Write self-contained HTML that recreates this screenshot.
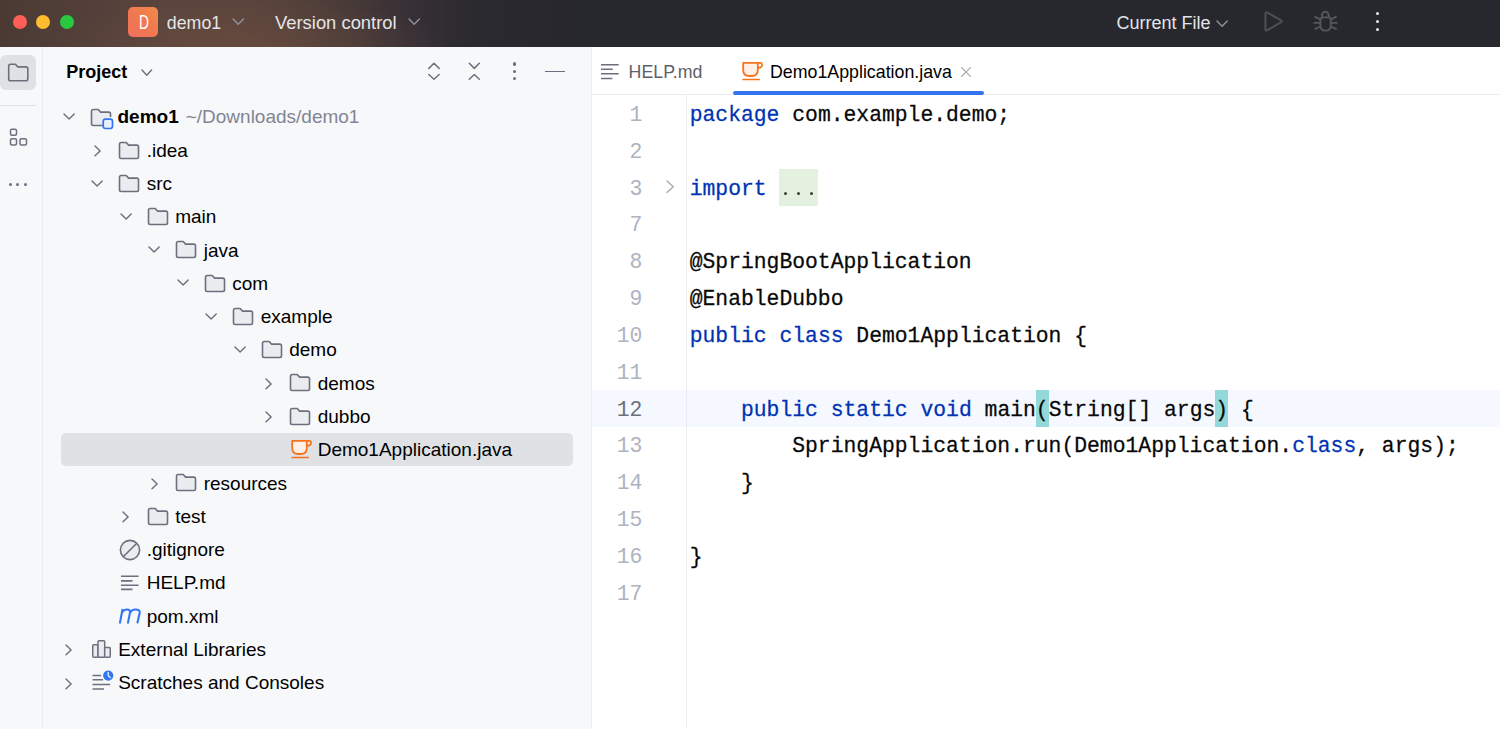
<!DOCTYPE html><html><head><meta charset="utf-8"><style>
html,body{margin:0;padding:0;}
body{width:1500px;height:729px;overflow:hidden;position:relative;background:#f7f8fa;font-family:"Liberation Sans",sans-serif;}
.t{position:absolute;line-height:0;white-space:pre;}
.ic{position:absolute;overflow:visible;}
.abs{position:absolute;}
</style></head><body>
<div class="abs" style="left:0;top:0;width:1500px;height:47px;background:#27282d;"></div>
<div class="abs" style="left:0;top:0;width:1500px;height:47px;background:linear-gradient(to right,#4b3a34 0px,#54403a 100px,#5a453d 170px,#5a443c 240px,#54413a 290px,#473937 350px,#373036 410px,#2d2b30 460px,#28282e 520px,#27282d 600px);"></div>
<div class="abs" style="left:0;top:0;width:1500px;height:47px;background:radial-gradient(ellipse 200px 50px at 250px 47px, rgba(112,80,64,0.5) 0%, rgba(112,80,64,0) 100%);"></div>
<div class="abs" style="left:12.7px;top:14.8px;width:14px;height:14px;border-radius:50%;background:#ff5f57;"></div>
<div class="abs" style="left:36.3px;top:14.8px;width:14px;height:14px;border-radius:50%;background:#febc2e;"></div>
<div class="abs" style="left:60.0px;top:14.8px;width:14px;height:14px;border-radius:50%;background:#28c840;"></div>
<div class="abs" style="left:128px;top:7px;width:30px;height:30px;border-radius:5px;background:linear-gradient(45deg,#f0715d,#f0784f 50%,#f08a4c);"></div>
<div class="t" style="left:138.6px;top:21.6px;font-size:20.3px;color:#fff;transform:scaleX(0.68);transform-origin:0 0;">D</div>
<div class="t" style="left:166.80px;top:23.23px;font-size:17.8px;color:#e4e5e8;font-weight:normal;font-family:"Liberation Sans", sans-serif;transform-origin:0 6.17px;-webkit-text-stroke-width:0.15px;">demo1</div>
<svg class="ic" style="left:231.6px;top:17.7px" width="12.5" height="7.3" viewBox="0 0 12.5 7.3"><path d="M1 1 L6.25 6.3 L11.5 1" fill="none" stroke="#8d909a" stroke-width="1.5" stroke-linecap="round" stroke-linejoin="round"/></svg>
<div class="t" style="left:275.00px;top:23.02px;font-size:18.4px;color:#e4e5e8;font-weight:normal;font-family:"Liberation Sans", sans-serif;transform-origin:0 6.38px;-webkit-text-stroke-width:0.15px;">Version control</div>
<svg class="ic" style="left:407.5px;top:17.8px" width="12.4" height="7.2" viewBox="0 0 12.4 7.2"><path d="M1 1 L6.2 6.2 L11.4 1" fill="none" stroke="#8d909a" stroke-width="1.5" stroke-linecap="round" stroke-linejoin="round"/></svg>
<div class="t" style="left:1116.50px;top:23.26px;font-size:18px;color:#e4e5e8;font-weight:normal;font-family:"Liberation Sans", sans-serif;transform-origin:0 6.24px;-webkit-text-stroke-width:0.15px;">Current File</div>
<svg class="ic" style="left:1215.8px;top:19.8px" width="12.2" height="7.2" viewBox="0 0 12.2 7.2"><path d="M1 1 L6.1 6.2 L11.2 1" fill="none" stroke="#8d909a" stroke-width="1.5" stroke-linecap="round" stroke-linejoin="round"/></svg>
<svg class="ic" style="left:0;top:0" width="1500" height="47" viewBox="0 0 1500 47"><path d="M1265.4 13.9 Q1265.4 11.5 1267.4 12.6 L1280.9 20.2 Q1282.7 21.3 1280.9 22.4 L1267.4 30.1 Q1265.4 31.3 1265.4 28.9 Z" fill="none" stroke="#4f5056" stroke-width="2" stroke-linejoin="round"/><g fill="none" stroke="#55575d" stroke-width="1.9" stroke-linecap="round" stroke-linejoin="round"><path d="M1320.4 20 Q1320.4 17.4 1323 17.4 H1328.2 Q1330.8 17.4 1330.8 20 V25.2 Q1330.8 30.6 1325.6 30.6 Q1320.4 30.6 1320.4 25.2 Z"/><path d="M1321.9 17 Q1321.9 11.8 1325.35 11.8 Q1328.8 11.8 1328.8 17"/><path d="M1315.2 16.9 L1319.8 19.2 M1314.4 22.9 H1319.8 M1315.2 28.8 L1319.8 26.8 M1336 16.9 L1331.4 19.2 M1336.8 22.9 H1331.4 M1336 28.8 L1331.4 26.8"/></g></svg>
<div class="abs" style="left:1375.6px;top:11.6px;width:3.8px;height:3.8px;border-radius:50%;background:#f0f0f0;"></div>
<div class="abs" style="left:1375.6px;top:19.6px;width:3.8px;height:3.8px;border-radius:50%;background:#f0f0f0;"></div>
<div class="abs" style="left:1375.6px;top:27.6px;width:3.8px;height:3.8px;border-radius:50%;background:#f0f0f0;"></div>
<div class="abs" style="left:42px;top:47px;width:1px;height:682px;background:#ebecf0;"></div>
<div class="abs" style="left:0px;top:55px;width:36px;height:35px;border-radius:6px;background:#dfe1e5;"></div>
<svg class="ic" style="left:6.5px;top:62.8px" width="23" height="20" viewBox="0 0 23 20"><path d="M1.7 3.3 Q1.7 1.3 3.5 1.3 H8.4 L10.8 3.9 H18.9 Q20.8 3.9 20.8 5.8 V16 Q20.8 17.8 18.9 17.8 H3.5 Q1.7 17.8 1.7 16 Z" fill="none" stroke="#6c707e" stroke-width="1.6" stroke-linejoin="round"/></svg>
<div class="abs" style="left:0px;top:104.5px;width:36px;height:1px;background:#dfe1e5;"></div>
<svg class="ic" style="left:8.6px;top:127.7px" width="20" height="20" viewBox="0 0 20 20"><g fill="none" stroke="#6c707e" stroke-width="1.5"><rect x="1.5" y="1.3" width="6" height="6" rx="1.5"/><rect x="1.5" y="10.8" width="6" height="6.2" rx="1.5"/><rect x="11" y="10.8" width="6.5" height="6.2" rx="1.5"/></g></svg>
<div class="abs" style="left:8.8px;top:183px;width:3px;height:3px;border-radius:50%;background:#6c707e;"></div>
<div class="abs" style="left:16.1px;top:183px;width:3px;height:3px;border-radius:50%;background:#6c707e;"></div>
<div class="abs" style="left:23.7px;top:183px;width:3px;height:3px;border-radius:50%;background:#6c707e;"></div>
<div class="abs" style="left:591px;top:47px;width:1px;height:682px;background:#ebecf0;"></div>
<div class="t" style="left:66.30px;top:72.06px;font-size:18px;color:#000;font-weight:bold;font-family:"Liberation Sans", sans-serif;transform-origin:0 6.24px;">Project</div>
<svg class="ic" style="left:140.6px;top:69.0px" width="11.6" height="7.2" viewBox="0 0 11.6 7.2"><path d="M1 1 L5.8 6.2 L10.6 1" fill="none" stroke="#6c707e" stroke-width="1.45" stroke-linecap="round" stroke-linejoin="round"/></svg>
<svg class="ic" style="left:0;top:0" width="600" height="100" viewBox="0 0 600 100"><path d="M428.8 68.4 L434 63.3 L439.1 68.4 M428.8 74.5 L434 79.3 L439.1 74.5 M469.3 63.3 L474.3 68.4 L479.3 63.3 M469.3 79.3 L474.3 74.5 L479.3 79.3" fill="none" stroke="#6c707e" stroke-width="1.5" stroke-linecap="round" stroke-linejoin="round"/></svg>
<div class="abs" style="left:513.1px;top:62.4px;width:3.2px;height:3.2px;border-radius:50%;background:#6c707e;"></div>
<div class="abs" style="left:513.1px;top:69.8px;width:3.2px;height:3.2px;border-radius:50%;background:#6c707e;"></div>
<div class="abs" style="left:513.1px;top:77.2px;width:3.2px;height:3.2px;border-radius:50%;background:#6c707e;"></div>
<div class="abs" style="left:545.4px;top:70.6px;width:19.2px;height:1.6px;background:#6c707e;"></div>
<div class="abs" style="left:61px;top:433.2px;width:512px;height:32.6px;border-radius:5px;background:#dfe1e5;"></div>
<svg class="ic" style="left:62.9px;top:112.9px" width="12.2" height="7.0" viewBox="0 0 12.2 7.0"><path d="M1 1 L6.1 6.0 L11.2 1" fill="none" stroke="#6c707e" stroke-width="1.45" stroke-linecap="round" stroke-linejoin="round"/></svg>
<svg class="ic" style="left:90.4px;top:107.6px" width="26" height="24" viewBox="0 0 26 24"><path d="M13 17.5 H3.2 Q1.5 17.5 1.5 15.8 V3.2 Q1.5 1.5 3.2 1.5 H8.2 L10.6 4.1 H18.8 Q20.5 4.1 20.5 5.8 V9" fill="#ebecf0" stroke="#6c707e" stroke-width="1.6" stroke-linejoin="round"/><rect x="13.2" y="11.2" width="9.3" height="9.3" rx="2.2" fill="#e7effd" stroke="#3574f0" stroke-width="1.7"/></svg>
<div class="t" style="left:117.50px;top:117.42px;font-size:19px;color:#000;font-weight:bold;font-family:"Liberation Sans", sans-serif;transform-origin:0 6.58px;transform:scaleY(1.065);">demo1</div>
<div class="t" style="left:185.70px;top:117.42px;font-size:19px;color:#818594;font-weight:normal;font-family:"Liberation Sans", sans-serif;transform-origin:0 6.58px;transform:scaleY(1.065);">~/Downloads/demo1</div>
<svg class="ic" style="left:93.6px;top:145.1px" width="7.1" height="11.8" viewBox="0 0 7.1 11.8"><path d="M1 1 L6.1 5.9 L1 10.8" fill="none" stroke="#6c707e" stroke-width="1.45" stroke-linecap="round" stroke-linejoin="round"/></svg>
<svg class="ic" style="left:118.4px;top:140.5px" width="22" height="19" viewBox="0 0 22 19"><path d="M1.5 3.2 Q1.5 1.5 3.2 1.5 H8.2 L10.6 4.1 H18.8 Q20.5 4.1 20.5 5.8 V15.8 Q20.5 17.5 18.8 17.5 H3.2 Q1.5 17.5 1.5 15.8 Z" fill="#ebecf0" stroke="#6c707e" stroke-width="1.6" stroke-linejoin="round"/></svg>
<div class="t" style="left:146.70px;top:150.70px;font-size:19px;color:#000;font-weight:normal;font-family:"Liberation Sans", sans-serif;transform-origin:0 6.58px;transform:scaleY(1.065);">.idea</div>
<svg class="ic" style="left:91.4px;top:179.5px" width="12.2" height="7.0" viewBox="0 0 12.2 7.0"><path d="M1 1 L6.1 6.0 L11.2 1" fill="none" stroke="#6c707e" stroke-width="1.45" stroke-linecap="round" stroke-linejoin="round"/></svg>
<svg class="ic" style="left:118.4px;top:173.8px" width="22" height="19" viewBox="0 0 22 19"><path d="M1.5 3.2 Q1.5 1.5 3.2 1.5 H8.2 L10.6 4.1 H18.8 Q20.5 4.1 20.5 5.8 V15.8 Q20.5 17.5 18.8 17.5 H3.2 Q1.5 17.5 1.5 15.8 Z" fill="#ebecf0" stroke="#6c707e" stroke-width="1.6" stroke-linejoin="round"/></svg>
<div class="t" style="left:146.70px;top:183.98px;font-size:19px;color:#000;font-weight:normal;font-family:"Liberation Sans", sans-serif;transform-origin:0 6.58px;transform:scaleY(1.065);">src</div>
<svg class="ic" style="left:119.9px;top:212.7px" width="12.2" height="7.0" viewBox="0 0 12.2 7.0"><path d="M1 1 L6.1 6.0 L11.2 1" fill="none" stroke="#6c707e" stroke-width="1.45" stroke-linecap="round" stroke-linejoin="round"/></svg>
<svg class="ic" style="left:146.9px;top:207.0px" width="22" height="19" viewBox="0 0 22 19"><path d="M1.5 3.2 Q1.5 1.5 3.2 1.5 H8.2 L10.6 4.1 H18.8 Q20.5 4.1 20.5 5.8 V15.8 Q20.5 17.5 18.8 17.5 H3.2 Q1.5 17.5 1.5 15.8 Z" fill="#ebecf0" stroke="#6c707e" stroke-width="1.6" stroke-linejoin="round"/></svg>
<div class="t" style="left:175.20px;top:217.26px;font-size:19px;color:#000;font-weight:normal;font-family:"Liberation Sans", sans-serif;transform-origin:0 6.58px;transform:scaleY(1.065);">main</div>
<svg class="ic" style="left:148.4px;top:246.0px" width="12.2" height="7.0" viewBox="0 0 12.2 7.0"><path d="M1 1 L6.1 6.0 L11.2 1" fill="none" stroke="#6c707e" stroke-width="1.45" stroke-linecap="round" stroke-linejoin="round"/></svg>
<svg class="ic" style="left:175.4px;top:240.3px" width="22" height="19" viewBox="0 0 22 19"><path d="M1.5 3.2 Q1.5 1.5 3.2 1.5 H8.2 L10.6 4.1 H18.8 Q20.5 4.1 20.5 5.8 V15.8 Q20.5 17.5 18.8 17.5 H3.2 Q1.5 17.5 1.5 15.8 Z" fill="#ebecf0" stroke="#6c707e" stroke-width="1.6" stroke-linejoin="round"/></svg>
<div class="t" style="left:203.70px;top:250.54px;font-size:19px;color:#000;font-weight:normal;font-family:"Liberation Sans", sans-serif;transform-origin:0 6.58px;transform:scaleY(1.065);">java</div>
<svg class="ic" style="left:176.9px;top:279.3px" width="12.2" height="7.0" viewBox="0 0 12.2 7.0"><path d="M1 1 L6.1 6.0 L11.2 1" fill="none" stroke="#6c707e" stroke-width="1.45" stroke-linecap="round" stroke-linejoin="round"/></svg>
<svg class="ic" style="left:203.9px;top:273.6px" width="22" height="19" viewBox="0 0 22 19"><path d="M1.5 3.2 Q1.5 1.5 3.2 1.5 H8.2 L10.6 4.1 H18.8 Q20.5 4.1 20.5 5.8 V15.8 Q20.5 17.5 18.8 17.5 H3.2 Q1.5 17.5 1.5 15.8 Z" fill="#ebecf0" stroke="#6c707e" stroke-width="1.6" stroke-linejoin="round"/></svg>
<div class="t" style="left:232.20px;top:283.82px;font-size:19px;color:#000;font-weight:normal;font-family:"Liberation Sans", sans-serif;transform-origin:0 6.58px;transform:scaleY(1.065);">com</div>
<svg class="ic" style="left:205.4px;top:312.6px" width="12.2" height="7.0" viewBox="0 0 12.2 7.0"><path d="M1 1 L6.1 6.0 L11.2 1" fill="none" stroke="#6c707e" stroke-width="1.45" stroke-linecap="round" stroke-linejoin="round"/></svg>
<svg class="ic" style="left:232.4px;top:306.9px" width="22" height="19" viewBox="0 0 22 19"><path d="M1.5 3.2 Q1.5 1.5 3.2 1.5 H8.2 L10.6 4.1 H18.8 Q20.5 4.1 20.5 5.8 V15.8 Q20.5 17.5 18.8 17.5 H3.2 Q1.5 17.5 1.5 15.8 Z" fill="#ebecf0" stroke="#6c707e" stroke-width="1.6" stroke-linejoin="round"/></svg>
<div class="t" style="left:260.70px;top:317.10px;font-size:19px;color:#000;font-weight:normal;font-family:"Liberation Sans", sans-serif;transform-origin:0 6.58px;transform:scaleY(1.065);">example</div>
<svg class="ic" style="left:233.9px;top:345.9px" width="12.2" height="7.0" viewBox="0 0 12.2 7.0"><path d="M1 1 L6.1 6.0 L11.2 1" fill="none" stroke="#6c707e" stroke-width="1.45" stroke-linecap="round" stroke-linejoin="round"/></svg>
<svg class="ic" style="left:260.9px;top:340.2px" width="22" height="19" viewBox="0 0 22 19"><path d="M1.5 3.2 Q1.5 1.5 3.2 1.5 H8.2 L10.6 4.1 H18.8 Q20.5 4.1 20.5 5.8 V15.8 Q20.5 17.5 18.8 17.5 H3.2 Q1.5 17.5 1.5 15.8 Z" fill="#ebecf0" stroke="#6c707e" stroke-width="1.6" stroke-linejoin="round"/></svg>
<div class="t" style="left:289.20px;top:350.38px;font-size:19px;color:#000;font-weight:normal;font-family:"Liberation Sans", sans-serif;transform-origin:0 6.58px;transform:scaleY(1.065);">demo</div>
<svg class="ic" style="left:264.6px;top:378.0px" width="7.1" height="11.8" viewBox="0 0 7.1 11.8"><path d="M1 1 L6.1 5.9 L1 10.8" fill="none" stroke="#6c707e" stroke-width="1.45" stroke-linecap="round" stroke-linejoin="round"/></svg>
<svg class="ic" style="left:289.4px;top:373.4px" width="22" height="19" viewBox="0 0 22 19"><path d="M1.5 3.2 Q1.5 1.5 3.2 1.5 H8.2 L10.6 4.1 H18.8 Q20.5 4.1 20.5 5.8 V15.8 Q20.5 17.5 18.8 17.5 H3.2 Q1.5 17.5 1.5 15.8 Z" fill="#ebecf0" stroke="#6c707e" stroke-width="1.6" stroke-linejoin="round"/></svg>
<div class="t" style="left:317.70px;top:383.66px;font-size:19px;color:#000;font-weight:normal;font-family:"Liberation Sans", sans-serif;transform-origin:0 6.58px;transform:scaleY(1.065);">demos</div>
<svg class="ic" style="left:264.6px;top:411.3px" width="7.1" height="11.8" viewBox="0 0 7.1 11.8"><path d="M1 1 L6.1 5.9 L1 10.8" fill="none" stroke="#6c707e" stroke-width="1.45" stroke-linecap="round" stroke-linejoin="round"/></svg>
<svg class="ic" style="left:289.4px;top:406.7px" width="22" height="19" viewBox="0 0 22 19"><path d="M1.5 3.2 Q1.5 1.5 3.2 1.5 H8.2 L10.6 4.1 H18.8 Q20.5 4.1 20.5 5.8 V15.8 Q20.5 17.5 18.8 17.5 H3.2 Q1.5 17.5 1.5 15.8 Z" fill="#ebecf0" stroke="#6c707e" stroke-width="1.6" stroke-linejoin="round"/></svg>
<div class="t" style="left:317.70px;top:416.94px;font-size:19px;color:#000;font-weight:normal;font-family:"Liberation Sans", sans-serif;transform-origin:0 6.58px;transform:scaleY(1.065);">dubbo</div>
<svg class="ic" style="left:290.2px;top:438.9px" width="24" height="21" viewBox="0 0 24 21"><path d="M2.2 1.9 H16.8 V9 Q16.8 15 10.8 15 H8.2 Q2.2 15 2.2 9 Z" fill="#fef0e6" stroke="#f7731b" stroke-width="1.8" stroke-linejoin="round"/><path d="M16.8 1.9 H19.5 Q21 1.9 21 3.4 V4.6 Q21 6.8 17 6.9" fill="none" stroke="#f7731b" stroke-width="1.7" stroke-linejoin="round"/><path d="M2.1 18.5 H18.2" stroke="#f7731b" stroke-width="1.7" stroke-linecap="round"/></svg>
<div class="t" style="left:317.70px;top:450.22px;font-size:19px;color:#000;font-weight:normal;font-family:"Liberation Sans", sans-serif;transform-origin:0 6.58px;transform:scaleY(1.065);">Demo1Application.java</div>
<svg class="ic" style="left:150.6px;top:477.9px" width="7.1" height="11.8" viewBox="0 0 7.1 11.8"><path d="M1 1 L6.1 5.9 L1 10.8" fill="none" stroke="#6c707e" stroke-width="1.45" stroke-linecap="round" stroke-linejoin="round"/></svg>
<svg class="ic" style="left:175.4px;top:473.3px" width="22" height="19" viewBox="0 0 22 19"><path d="M1.5 3.2 Q1.5 1.5 3.2 1.5 H8.2 L10.6 4.1 H18.8 Q20.5 4.1 20.5 5.8 V15.8 Q20.5 17.5 18.8 17.5 H3.2 Q1.5 17.5 1.5 15.8 Z" fill="#ebecf0" stroke="#6c707e" stroke-width="1.6" stroke-linejoin="round"/></svg>
<div class="t" style="left:203.70px;top:483.50px;font-size:19px;color:#000;font-weight:normal;font-family:"Liberation Sans", sans-serif;transform-origin:0 6.58px;transform:scaleY(1.065);">resources</div>
<svg class="ic" style="left:122.1px;top:511.2px" width="7.1" height="11.8" viewBox="0 0 7.1 11.8"><path d="M1 1 L6.1 5.9 L1 10.8" fill="none" stroke="#6c707e" stroke-width="1.45" stroke-linecap="round" stroke-linejoin="round"/></svg>
<svg class="ic" style="left:146.9px;top:506.6px" width="22" height="19" viewBox="0 0 22 19"><path d="M1.5 3.2 Q1.5 1.5 3.2 1.5 H8.2 L10.6 4.1 H18.8 Q20.5 4.1 20.5 5.8 V15.8 Q20.5 17.5 18.8 17.5 H3.2 Q1.5 17.5 1.5 15.8 Z" fill="#ebecf0" stroke="#6c707e" stroke-width="1.6" stroke-linejoin="round"/></svg>
<div class="t" style="left:175.20px;top:516.78px;font-size:19px;color:#000;font-weight:normal;font-family:"Liberation Sans", sans-serif;transform-origin:0 6.58px;transform:scaleY(1.065);">test</div>
<svg class="ic" style="left:118.7px;top:538.5px" width="22" height="22" viewBox="0 0 22 22"><circle cx="11" cy="11" r="9.6" fill="#ebecf0" stroke="#6c707e" stroke-width="1.6"/><path d="M4.2 17.8 L17.8 4.2" stroke="#6c707e" stroke-width="1.6"/></svg>
<div class="t" style="left:146.70px;top:550.06px;font-size:19px;color:#000;font-weight:normal;font-family:"Liberation Sans", sans-serif;transform-origin:0 6.58px;transform:scaleY(1.065);">.gitignore</div>
<svg class="ic" style="left:120.5px;top:574.9px" width="20" height="16" viewBox="0 0 20 16"><g stroke="#6c707e" stroke-width="1.6"><path d="M0 1.3 H17.5 M0 5.9 H11.5 M0 10.2 H17.5 M0 14.4 H11.5"/></g></svg>
<div class="t" style="left:146.70px;top:583.34px;font-size:19px;color:#000;font-weight:normal;font-family:"Liberation Sans", sans-serif;transform-origin:0 6.58px;transform:scaleY(1.065);">HELP.md</div>
<svg class="ic" style="left:0;top:-0.40px" width="200" height="640" viewBox="0 0 200 640"><path d="M120 622.6 L122.4 609.8 M121.6 613.4 Q123.6 609.5 127.1 609.5 Q130.6 609.5 129.9 613 L128 622.6 M129.9 613 Q131.6 609.5 135.4 609.5 Q140.3 609.5 139.7 613 L137.5 622.6" fill="none" stroke="#3177f3" stroke-width="2.1" stroke-linecap="round" stroke-linejoin="round"/></svg>
<div class="t" style="left:146.70px;top:616.62px;font-size:19px;color:#000;font-weight:normal;font-family:"Liberation Sans", sans-serif;transform-origin:0 6.58px;transform:scaleY(1.065);">pom.xml</div>
<svg class="ic" style="left:65.1px;top:644.3px" width="7.1" height="11.8" viewBox="0 0 7.1 11.8"><path d="M1 1 L6.1 5.9 L1 10.8" fill="none" stroke="#6c707e" stroke-width="1.45" stroke-linecap="round" stroke-linejoin="round"/></svg>
<svg class="ic" style="left:92.20px;top:638.98px" width="21" height="20" viewBox="0 0 21 20"><g fill="#ebecf0" stroke="#6c707e" stroke-width="1.5" stroke-linejoin="round"><rect x="0.75" y="5.77" width="5.25" height="12.4" rx="1"/><rect x="6" y="1.87" width="6.7" height="16.3" rx="1"/><rect x="12.7" y="8.57" width="5.55" height="9.6" rx="1"/></g></svg>
<div class="t" style="left:118.20px;top:649.90px;font-size:19px;color:#000;font-weight:normal;font-family:"Liberation Sans", sans-serif;transform-origin:0 6.58px;transform:scaleY(1.065);">External Libraries</div>
<svg class="ic" style="left:65.1px;top:677.6px" width="7.1" height="11.8" viewBox="0 0 7.1 11.8"><path d="M1 1 L6.1 5.9 L1 10.8" fill="none" stroke="#6c707e" stroke-width="1.45" stroke-linecap="round" stroke-linejoin="round"/></svg>
<svg class="ic" style="left:91.70px;top:669.46px" width="23" height="22" viewBox="0 0 23 22"><g stroke="#6c707e" stroke-width="1.5"><path d="M0.5 6.54 H9.2 M0.5 10.84 H11.1 M0.5 15.54 H18.1 M0.5 19.94 H12.05"/></g><circle cx="16.2" cy="6.54" r="5.1" fill="#3177f3"/><path d="M16.2 3.3 V6.6 L18.2 8.5" stroke="#fff" stroke-width="1.2" fill="none" stroke-linecap="round" stroke-linejoin="round"/></svg>
<div class="t" style="left:118.20px;top:683.18px;font-size:19px;color:#000;font-weight:normal;font-family:"Liberation Sans", sans-serif;transform-origin:0 6.58px;transform:scaleY(1.065);">Scratches and Consoles</div>
<div class="abs" style="left:592px;top:47px;width:908px;height:682px;background:#ffffff;"></div>
<div class="abs" style="left:592px;top:94px;width:908px;height:1px;background:#ebecf0;"></div>
<svg class="ic" style="left:601px;top:63.5px" width="19" height="16" viewBox="0 0 19 16"><g stroke="#6c707e" stroke-width="1.5"><path d="M0 0.8 H17.7 M0 5.2 H11.7 M0 9.8 H17.7 M0 14.5 H11.3"/></g></svg>
<div class="t" style="left:628.60px;top:72.13px;font-size:17.8px;color:#5e6068;font-weight:normal;font-family:"Liberation Sans", sans-serif;transform-origin:0 6.17px;">HELP.md</div>
<svg class="ic" style="left:741.0px;top:61.1px" width="24" height="21" viewBox="0 0 24 21"><path d="M2.2 1.9 H16.8 V9 Q16.8 15 10.8 15 H8.2 Q2.2 15 2.2 9 Z" fill="#fef0e6" stroke="#f7731b" stroke-width="1.8" stroke-linejoin="round"/><path d="M16.8 1.9 H19.5 Q21 1.9 21 3.4 V4.6 Q21 6.8 17 6.9" fill="none" stroke="#f7731b" stroke-width="1.7" stroke-linejoin="round"/><path d="M2.1 18.5 H18.2" stroke="#f7731b" stroke-width="1.7" stroke-linecap="round"/></svg>
<div class="t" style="left:770.00px;top:72.13px;font-size:17.8px;color:#000;font-weight:normal;font-family:"Liberation Sans", sans-serif;transform-origin:0 6.17px;">Demo1Application.java</div>
<svg class="ic" style="left:960.3px;top:65.6px" width="12" height="12" viewBox="0 0 12 12"><path d="M1.6 1.6 L10.4 10.4 M10.4 1.6 L1.6 10.4" stroke="#a3a7b1" stroke-width="1.25" stroke-linecap="round"/></svg>
<div class="abs" style="left:733.2px;top:90.5px;width:251px;height:4.2px;border-radius:2.1px;background:#3574f0;"></div>
<div class="abs" style="left:592px;top:390.20px;width:908px;height:36.85px;background:#f5f8fe;"></div>
<div class="abs" style="left:686px;top:95px;width:1px;height:634px;background:#ebecf0;"></div>
<div class="abs" style="left:779.14px;top:169.10px;width:38.46px;height:36.6px;background:#e4f1e1;"></div>
<div class="abs" style="left:1035.84px;top:390px;width:13.02px;height:36.7px;background:#93d9d9;"></div>
<div class="abs" style="left:1215.32px;top:390px;width:13.02px;height:36.7px;background:#93d9d9;"></div>
<svg class="ic" style="left:665.8px;top:180.3px" width="8.2" height="13.6" viewBox="0 0 8.2 13.6"><path d="M1 1 L7.2 6.8 L1 12.6" fill="none" stroke="#a6aab6" stroke-width="1.4" stroke-linecap="round" stroke-linejoin="round"/></svg>
<div class="abs" style="left:783.85px;top:191.55px;width:3.5px;height:3.5px;border-radius:50%;background:#36403a;"></div>
<div class="abs" style="left:796.75px;top:191.55px;width:3.5px;height:3.5px;border-radius:50%;background:#36403a;"></div>
<div class="abs" style="left:809.65px;top:191.55px;width:3.5px;height:3.5px;border-radius:50%;background:#36403a;"></div>
<div class="t" style="left:540px;width:102.3px;text-align:right;top:114.84px;font-size:21.37px;color:#aeb3c2;font-family:'Liberation Mono',monospace;">1</div>
<div class="t" style="left:689.70px;top:114.84px;font-size:21.37px;font-family:'Liberation Mono',monospace;transform:scaleY(1.07);transform-origin:0 5.66px;-webkit-text-stroke-width:0.25px;"><span style="color:#0033b3">package</span><span style="color:#080808"> com.example.demo;</span></div>
<div class="t" style="left:540px;width:102.3px;text-align:right;top:151.69px;font-size:21.37px;color:#aeb3c2;font-family:'Liberation Mono',monospace;">2</div>
<div class="t" style="left:540px;width:102.3px;text-align:right;top:188.54px;font-size:21.37px;color:#aeb3c2;font-family:'Liberation Mono',monospace;">3</div>
<div class="t" style="left:689.70px;top:188.54px;font-size:21.37px;font-family:'Liberation Mono',monospace;transform:scaleY(1.07);transform-origin:0 5.66px;-webkit-text-stroke-width:0.25px;"><span style="color:#0033b3">import</span></div>
<div class="t" style="left:540px;width:102.3px;text-align:right;top:225.39px;font-size:21.37px;color:#aeb3c2;font-family:'Liberation Mono',monospace;">7</div>
<div class="t" style="left:540px;width:102.3px;text-align:right;top:262.24px;font-size:21.37px;color:#aeb3c2;font-family:'Liberation Mono',monospace;">8</div>
<div class="t" style="left:689.70px;top:262.24px;font-size:21.37px;font-family:'Liberation Mono',monospace;transform:scaleY(1.07);transform-origin:0 5.66px;-webkit-text-stroke-width:0.25px;"><span style="color:#080808">@SpringBootApplication</span></div>
<div class="t" style="left:540px;width:102.3px;text-align:right;top:299.09px;font-size:21.37px;color:#aeb3c2;font-family:'Liberation Mono',monospace;">9</div>
<div class="t" style="left:689.70px;top:299.09px;font-size:21.37px;font-family:'Liberation Mono',monospace;transform:scaleY(1.07);transform-origin:0 5.66px;-webkit-text-stroke-width:0.25px;"><span style="color:#080808">@EnableDubbo</span></div>
<div class="t" style="left:540px;width:102.3px;text-align:right;top:335.94px;font-size:21.37px;color:#aeb3c2;font-family:'Liberation Mono',monospace;">10</div>
<div class="t" style="left:689.70px;top:335.94px;font-size:21.37px;font-family:'Liberation Mono',monospace;transform:scaleY(1.07);transform-origin:0 5.66px;-webkit-text-stroke-width:0.25px;"><span style="color:#0033b3">public</span><span style="color:#080808"> </span><span style="color:#0033b3">class</span><span style="color:#080808"> Demo1Application {</span></div>
<div class="t" style="left:540px;width:102.3px;text-align:right;top:372.79px;font-size:21.37px;color:#aeb3c2;font-family:'Liberation Mono',monospace;">11</div>
<div class="t" style="left:540px;width:102.3px;text-align:right;top:409.64px;font-size:21.37px;color:#6c707e;font-family:'Liberation Mono',monospace;">12</div>
<div class="t" style="left:689.70px;top:409.64px;font-size:21.37px;font-family:'Liberation Mono',monospace;transform:scaleY(1.07);transform-origin:0 5.66px;-webkit-text-stroke-width:0.25px;"><span style="color:#080808">    </span><span style="color:#0033b3">public</span><span style="color:#080808"> </span><span style="color:#0033b3">static</span><span style="color:#080808"> </span><span style="color:#0033b3">void</span><span style="color:#080808"> main(String[] args) {</span></div>
<div class="t" style="left:540px;width:102.3px;text-align:right;top:446.49px;font-size:21.37px;color:#aeb3c2;font-family:'Liberation Mono',monospace;">13</div>
<div class="t" style="left:689.70px;top:446.49px;font-size:21.37px;font-family:'Liberation Mono',monospace;transform:scaleY(1.07);transform-origin:0 5.66px;-webkit-text-stroke-width:0.25px;"><span style="color:#080808">        SpringApplication.run(Demo1Application.</span><span style="color:#0033b3">class</span><span style="color:#080808">, args);</span></div>
<div class="t" style="left:540px;width:102.3px;text-align:right;top:483.34px;font-size:21.37px;color:#aeb3c2;font-family:'Liberation Mono',monospace;">14</div>
<div class="t" style="left:689.70px;top:483.34px;font-size:21.37px;font-family:'Liberation Mono',monospace;transform:scaleY(1.07);transform-origin:0 5.66px;-webkit-text-stroke-width:0.25px;"><span style="color:#080808">    }</span></div>
<div class="t" style="left:540px;width:102.3px;text-align:right;top:520.19px;font-size:21.37px;color:#aeb3c2;font-family:'Liberation Mono',monospace;">15</div>
<div class="t" style="left:540px;width:102.3px;text-align:right;top:557.04px;font-size:21.37px;color:#aeb3c2;font-family:'Liberation Mono',monospace;">16</div>
<div class="t" style="left:689.70px;top:557.04px;font-size:21.37px;font-family:'Liberation Mono',monospace;transform:scaleY(1.07);transform-origin:0 5.66px;-webkit-text-stroke-width:0.25px;"><span style="color:#080808">}</span></div>
<div class="t" style="left:540px;width:102.3px;text-align:right;top:593.89px;font-size:21.37px;color:#aeb3c2;font-family:'Liberation Mono',monospace;">17</div>
</body></html>
